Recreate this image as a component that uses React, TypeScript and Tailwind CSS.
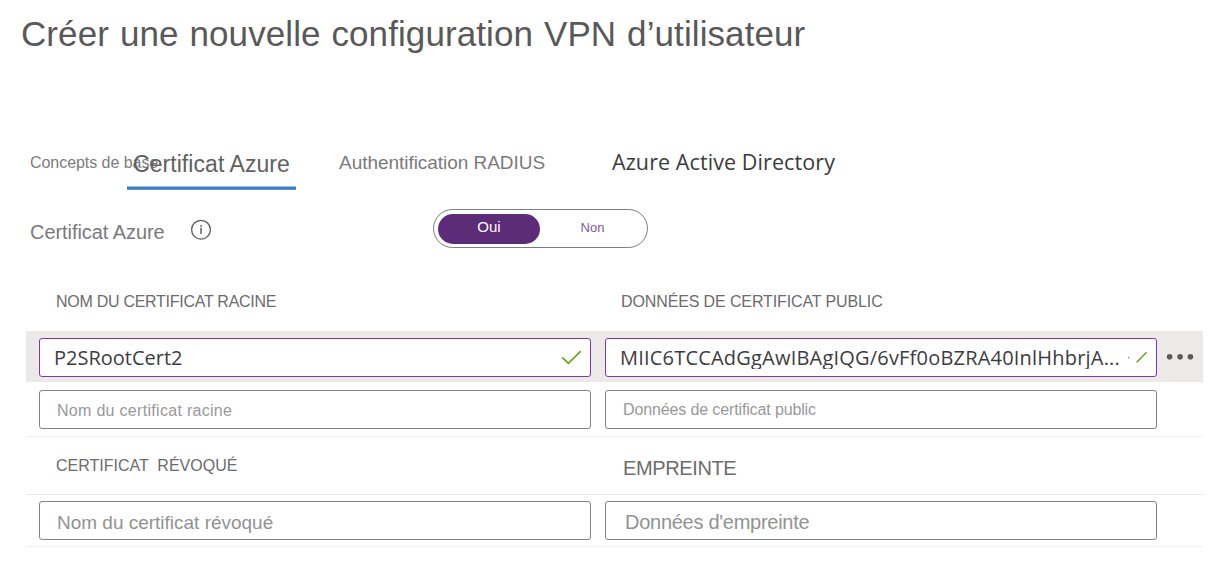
import type { ReactNode } from "react";

const arial = "font-['Liberation_Sans',Arial,sans-serif]";
const segoe = "font-['Open_Sans','Noto_Sans',sans-serif]";

function Field({ active = false, className = "", children }: { active?: boolean; className?: string; children: ReactNode }) {
  return (
    <div
      className={`flex h-[39px] w-[552px] shrink-0 items-center rounded-[3px] border bg-white ${active ? "border-[#8137a6]" : "border-[#838383]"} ${className}`}
    >
      {children}
    </div>
  );
}

function InfoIcon() {
  return (
    <svg width="22" height="22" viewBox="0 0 22 22" fill="none" className="shrink-0">
      <circle cx="11" cy="10.7" r="9.4" stroke="#5c5c5c" strokeWidth="1.3" />
      <rect x="10.3" y="8.7" width="1.5" height="6.2" fill="#5c5c5c" />
      <rect x="10.2" y="6.2" width="1.7" height="1.5" fill="#5c5c5c" />
    </svg>
  );
}

export default function App() {
  return (
    <main className={`flex h-[581px] w-[1227px] flex-col overflow-hidden bg-white whitespace-pre text-[#666] ${arial}`}>
      <header className="flex h-[68px] shrink-0 items-center pl-[21px]">
        <h1 className="text-[35px] leading-[40px] tracking-[0.09px] [word-spacing:1.1px] text-[#595959]">Créer une nouvelle configuration VPN d’utilisateur</h1>
      </header>

      <nav className="mt-[70px] flex h-[52px] shrink-0 items-start pl-[30px]">
        <span className="mt-[13px] w-[97px] text-[16px] leading-[24px] tracking-[-0.05px] text-[#7c7c7c]">Concepts de base</span>
        <div className="flex h-[52px] w-[169px] flex-col justify-between">
          <span className="mt-[11px] pl-[6px] text-[23px] leading-[30px] tracking-[0.06px] text-[#616161]">Certificat Azure</span>
          <span className="h-[4px] border-y border-t-[#9dc0ea] border-b-[#5c96dc] bg-[#387bd2]" />
        </div>
        <span className="mt-[13px] ml-[43px] w-[273px] text-[19px] leading-[24px] tracking-[-0.04px] text-[#7a7a7a]">Authentification RADIUS</span>
        <span className={`mt-[9px] text-[21.5px] leading-[30px] tracking-[0.09px] text-[#3b3b3b] ${segoe}`}>Azure Active Directory</span>
      </nav>

      <section className="mt-[19px] flex h-[39px] shrink-0 items-start pl-[30px]">
        <span className="mt-[8px] w-[160px] text-[20px] leading-[30px] tracking-[-0.06px] text-[#7a7a7a]">Certificat Azure</span>
        <div className="mt-[10px]"><InfoIcon /></div>
        <div className="ml-[221px] flex h-[39px] w-[215px] items-center rounded-full border border-[#7d7d7d] px-[4px]">
          <span className="flex h-[30px] w-[102px] shrink-0 justify-center rounded-full bg-[#5c2c78] text-[15px] leading-[26px] text-white">Oui</span>
          <span className="w-[105px] pb-[2px] pl-[2px] text-center text-[13px] leading-[28px] text-[#805a9c]">Non</span>
        </div>
      </section>

      <section className="flex h-[83px] shrink-0 items-start pt-[42px] text-[16px] leading-[24px] text-[#6c6c6c]">
        <span className="ml-[56px] w-[565px] tracking-[-0.27px]">NOM DU CERTIFICAT RACINE</span>
        <span className="tracking-[-0.12px]">DONNÉES DE CERTIFICAT PUBLIC</span>
      </section>

      <section className="ml-[26px] flex h-[51px] w-[1177px] shrink-0 items-start gap-[14px] bg-[#ebeae9] pt-[7px] pl-[13px]">
        <Field active className="justify-between pr-[8px] pl-[14px]">
          <span className={`text-[20px] leading-[30px] text-[#3d3d3d] ${segoe}`}>P2SRootCert2</span>
          <svg width="21" height="16" viewBox="0 0 21 16" fill="none">
            <path d="M1.2 7.4 7.4 13.4 19.7 1.2" stroke="#67a51c" strokeWidth="1.7" />
          </svg>
        </Field>
        <Field active className="pl-[14px]">
          <span className={`-mt-px h-[24px] w-[507px] overflow-hidden text-[20px] leading-[26px] tracking-[0.2px] text-[#3d3d3d] ${segoe}`}>
            MIIC6TCCAdGgAwIBAgIQG/6vFf0oBZRA40InlHhbrjA...
          </span>
          <svg width="21" height="16" viewBox="0 0 21 16" fill="none">
            <path d="M1 7.5h1.2M9.7 12.3 19.6 2.2" stroke="#67a51c" strokeWidth="1.6" />
          </svg>
        </Field>
        <svg width="28" height="39" viewBox="0 0 28 39" fill="#5b5b5b" className="-ml-[5px]">
          <circle cx="3.6" cy="18.8" r="2.8" />
          <circle cx="14.1" cy="18.8" r="2.8" />
          <circle cx="24.4" cy="18.8" r="2.8" />
        </svg>
      </section>

      <section className="ml-[26px] flex h-[55px] w-[1177px] shrink-0 gap-[14px] border-b border-[#eeeeee] pt-[8px] pl-[13px]">
        <Field className="pl-[17px]">
          <span className="mt-[3px] text-[16px] leading-[24px] tracking-[0.3px] text-[#999]">Nom du certificat racine</span>
        </Field>
        <Field className="pl-[17px]">
          <span className="mt-[1px] text-[16px] leading-[24px] tracking-[-0.13px] text-[#999]">Données de certificat public</span>
        </Field>
      </section>

      <section className="ml-[26px] flex h-[58px] w-[1177px] shrink-0 items-start border-b border-[#e8e8e8] pl-[30px]">
        <span className="mt-[17px] w-[567px] text-[16px] leading-[24px] text-[#6c6c6c]">{"CERTIFICAT  RÉVOQUÉ"}</span>
        <span className="mt-[16px] text-[20px] leading-[30px] tracking-[-0.38px] text-[#6c6c6c]">EMPREINTE</span>
      </section>

      <section className="ml-[26px] flex h-[52px] w-[1177px] shrink-0 gap-[14px] border-b border-[#eeeeee] pt-[6px] pl-[13px]">
        <Field className="pl-[17px]">
          <span className="mt-[5px] text-[19px] leading-[24px] tracking-[-0.01px] text-[#929292]">Nom du certificat révoqué</span>
        </Field>
        <Field className="pl-[19px]">
          <span className="mt-[2px] text-[20px] leading-[24px] tracking-[-0.27px] text-[#929292]">Données d'empreinte</span>
        </Field>
      </section>
    </main>
  );
}
